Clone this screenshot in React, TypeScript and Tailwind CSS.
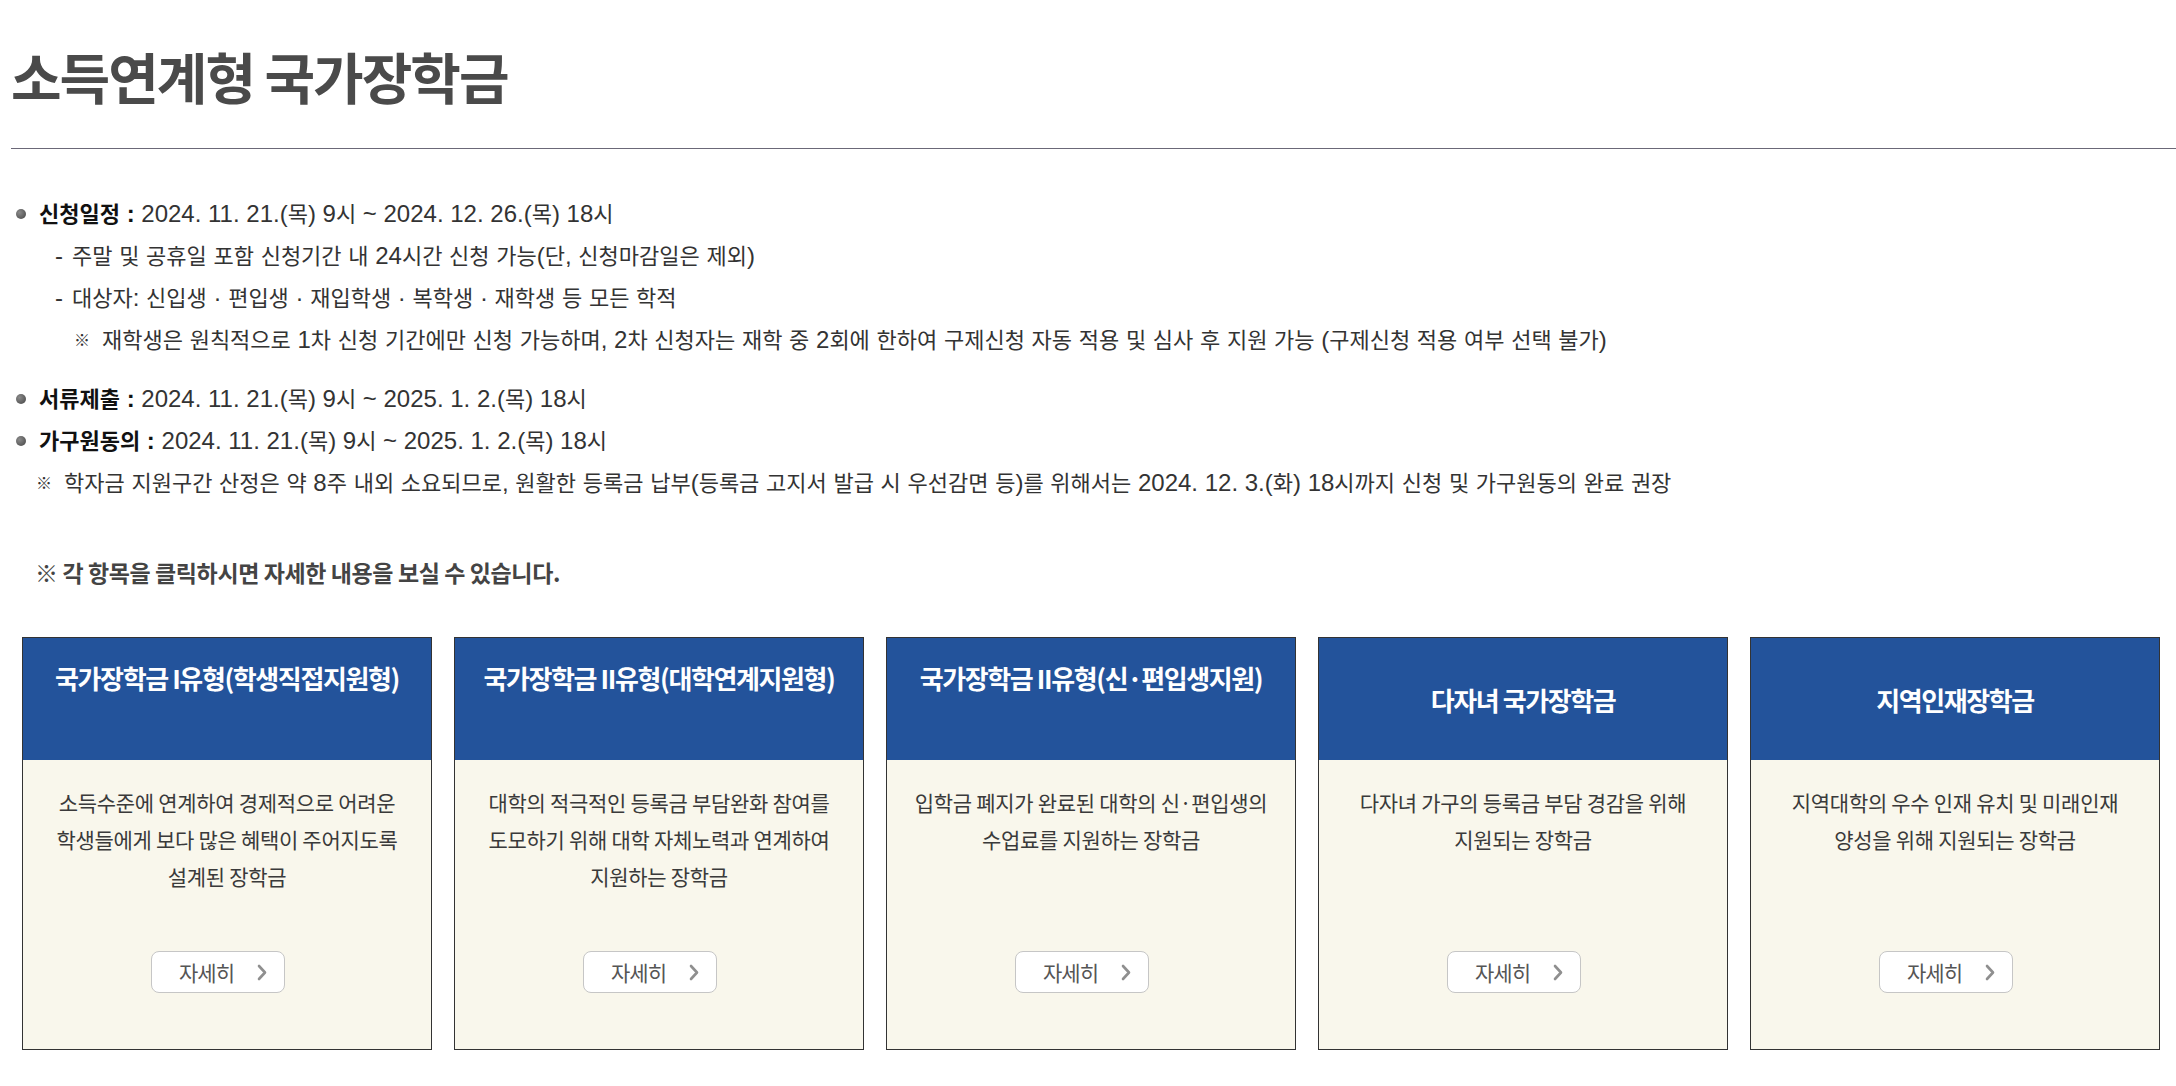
import React from "react";

const cards = [
  {
    title: "국가장학금 I유형(학생직접지원형)",
    desc: ["소득수준에 연계하여 경제적으로 어려운", "학생들에게 보다 많은 혜택이 주어지도록", "설계된 장학금"],
    top: true,
  },
  {
    title: "국가장학금 II유형(대학연계지원형)",
    desc: ["대학의 적극적인 등록금 부담완화 참여를", "도모하기 위해 대학 자체노력과 연계하여", "지원하는 장학금"],
    top: true,
  },
  {
    title: "국가장학금 II유형(신·편입생지원)",
    desc: ["입학금 폐지가 완료된 대학의 신·편입생의", "수업료를 지원하는 장학금"],
    top: true,
  },
  {
    title: "다자녀 국가장학금",
    desc: ["다자녀 가구의 등록금 부담 경감을 위해", "지원되는 장학금"],
    top: false,
  },
  {
    title: "지역인재장학금",
    desc: ["지역대학의 우수 인재 유치 및 미래인재", "양성을 위해 지원되는 장학금"],
    top: false,
  },
];

// Hangul runs are set slightly smaller than the Latin runs, as in the original font mix.
function Mix({ text }: { text: string }) {
  const parts = text.split(/([\uAC00-\uD7A3]+)/);
  return (
    <>
      {parts.map((p, i) =>
        /[\uAC00-\uD7A3]/.test(p) ? (
          <span key={i} className="text-[22px]">
            {p}
          </span>
        ) : (
          <React.Fragment key={i}>{p}</React.Fragment>
        )
      )}
    </>
  );
}

function Bullet() {
  return <span className="ml-[5px] mr-[13px] inline-block h-[10px] w-[10px] shrink-0 rounded-full bg-[radial-gradient(circle_at_35%_35%,#8a8a8a,#444)]" />;
}

function Card({ title, desc, top }: { title: string; desc: string[]; top: boolean }) {
  return (
    <div className="flex h-[413px] flex-col border border-[#333] font-['Noto_Sans_CJK_KR',sans-serif]">
      <div className={top ? "flex h-[122px] items-start justify-center bg-[#23539b] pt-[22px]" : "flex h-[122px] items-center justify-center bg-[#23539b]"}>
        <h3 className="text-[26px] font-bold leading-[35px] tracking-[-1.4px] text-white">{title}</h3>
      </div>
      <div className="flex flex-1 flex-col items-center bg-[#f9f7ec] pb-[56px] pt-[24px]">
        <p className="text-center text-[21px] leading-[37px] tracking-[-0.3px] text-[#3a3a3a]">
          {desc.map((d, i) => (
            <React.Fragment key={i}>
              {d}
              {i < desc.length - 1 && <br />}
            </React.Fragment>
          ))}
        </p>
        <button className="mr-[18px] mt-auto flex h-[42px] w-[134px] items-center rounded-[8px] border border-[#c6c6c6] bg-white pl-[27px]">
          <span className="text-[21px] leading-none tracking-[-1px] text-[#555]">자세히</span>
          <svg className="ml-[22px]" width="12" height="19" viewBox="0 0 12 19" fill="none">
            <path d="M3 3 L9 9.5 L3 16" stroke="#8f8f8f" strokeWidth="2.6" strokeLinecap="round" strokeLinejoin="round" />
          </svg>
        </button>
      </div>
    </div>
  );
}

export default function App() {
  return (
    <div className="min-h-[1086px] bg-white pl-[11px] font-['Liberation_Sans','Noto_Sans_CJK_KR',sans-serif]">
      <h1 className="pt-[42px] font-['Noto_Sans_CJK_KR',sans-serif] text-[55px] font-bold leading-[66px] tracking-[-2px] text-[#4a4a4a]">
        소득연계형 국가장학금
      </h1>
      <div className="mt-[40px] h-px bg-[#6b6878]" />

      <ul className="mt-[44px] text-[24px] leading-[41px] text-[#333]">
        <li className="flex items-center">
          <Bullet />
          <span>
            <b className="text-[#111]">
              <Mix text="신청일정 :" />
            </b>{" "}
            <Mix text="2024. 11. 21.(목) 9시 ~ 2024. 12. 26.(목) 18시" />
          </span>
        </li>
        <li className="ml-[44px] flex">
          <span className="w-[17px] shrink-0">-</span>
          <span>
            <Mix text="주말 및 공휴일 포함 신청기간 내 24시간 신청 가능(단, 신청마감일은 제외)" />
          </span>
        </li>
        <li className="ml-[44px] flex">
          <span className="w-[17px] shrink-0">-</span>
          <span>
            <Mix text="대상자: 신입생 · 편입생 · 재입학생 · 복학생 · 재학생 등 모든 학적" />
          </span>
        </li>
        <li className="ml-[63px] flex items-center">
          <span className="w-[28px] shrink-0 text-[16px]">※</span>
          <span>
            <Mix text="재학생은 원칙적으로 1차 신청 기간에만 신청 가능하며, 2차 신청자는 재학 중 2회에 한하여 구제신청 자동 적용 및 심사 후 지원 가능 (구제신청 적용 여부 선택 불가)" />
          </span>
        </li>
        <li className="mt-[17px] flex items-center">
          <Bullet />
          <span>
            <b className="text-[#111]">
              <Mix text="서류제출 :" />
            </b>{" "}
            <Mix text="2024. 11. 21.(목) 9시 ~ 2025. 1. 2.(목) 18시" />
          </span>
        </li>
        <li className="flex items-center">
          <Bullet />
          <span>
            <b className="text-[#111]">
              <Mix text="가구원동의 :" />
            </b>{" "}
            <Mix text="2024. 11. 21.(목) 9시 ~ 2025. 1. 2.(목) 18시" />
          </span>
        </li>
        <li className="ml-[25px] flex items-center">
          <span className="w-[28px] shrink-0 text-[16px]">※</span>
          <span>
            <Mix text="학자금 지원구간 산정은 약 8주 내외 소요되므로, 원활한 등록금 납부(등록금 고지서 발급 시 우선감면 등)를 위해서는 2024. 12. 3.(화) 18시까지 신청 및 가구원동의 완료 권장" />
          </span>
        </li>
      </ul>

      <p className="ml-[24px] mt-[53px] font-['Noto_Sans_CJK_KR',sans-serif] text-[23px] font-bold leading-[30px] tracking-[-0.4px] text-[#444]">
        ※ 각 항목을 클릭하시면 자세한 내용을 보실 수 있습니다.
      </p>

      <div className="ml-[11px] mr-[16px] mt-[50px] grid grid-cols-5 gap-[22px]">
        {cards.map((c) => (
          <Card key={c.title} {...c} />
        ))}
      </div>
    </div>
  );
}
